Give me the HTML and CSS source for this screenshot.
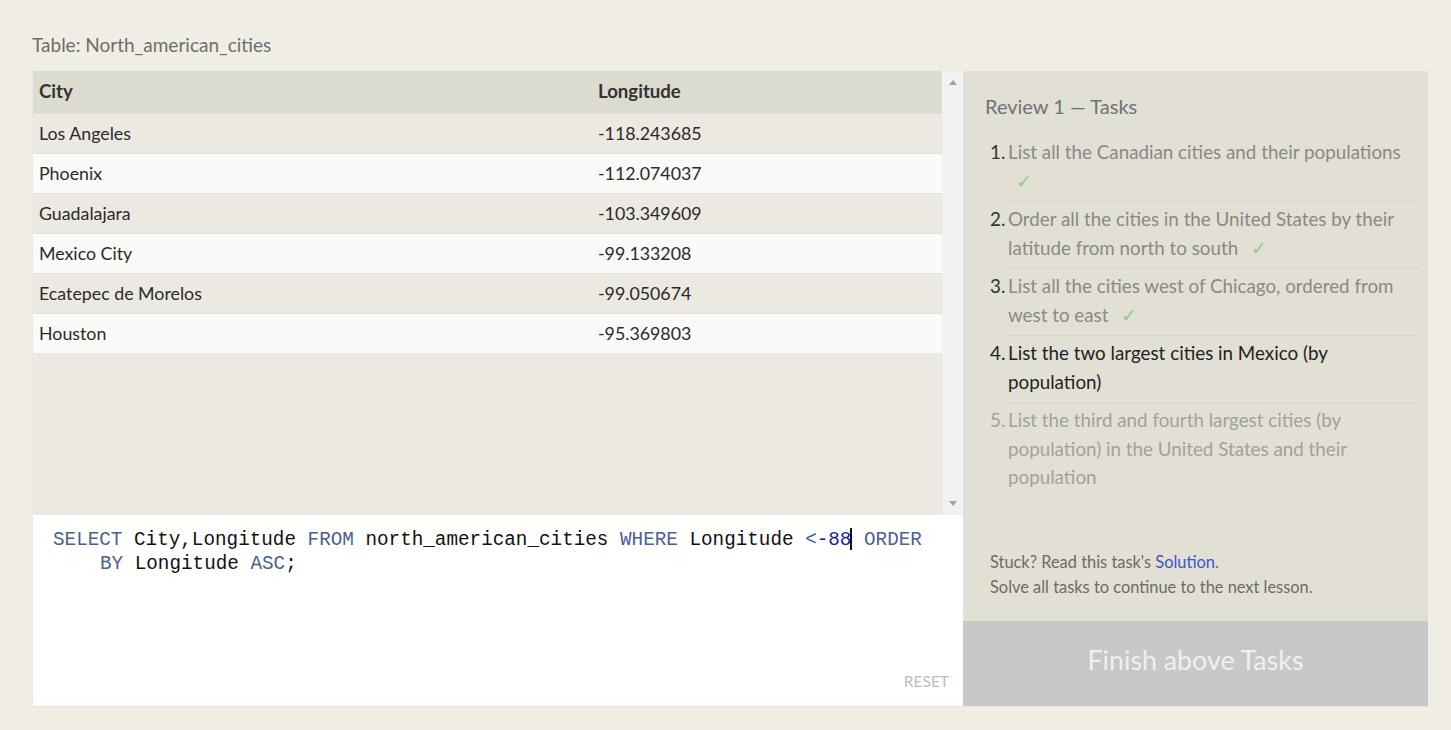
FILE: index.html
```html
<!DOCTYPE html>
<html>
<head>
<meta charset="utf-8">
<link rel="stylesheet" href="styles.css">
</head>
<body>
<div class="page">
  <div class="title">Table: North_american_cities</div>
  <div class="main">
    <div class="left">
      <div class="grid">
        <div class="table-wrap">
          <table class="data">
            <thead>
              <tr><th class="c1">City</th><th>Longitude</th></tr>
            </thead>
            <tbody>
              <tr><td>Los Angeles</td><td>-118.243685</td></tr>
              <tr><td>Phoenix</td><td>-112.074037</td></tr>
              <tr><td>Guadalajara</td><td>-103.349609</td></tr>
              <tr><td>Mexico City</td><td>-99.133208</td></tr>
              <tr><td>Ecatepec de Morelos</td><td>-99.050674</td></tr>
              <tr><td>Houston</td><td>-95.369803</td></tr>
            </tbody>
          </table>
        </div>
        <div class="scrollbar">
          <span class="arrow up"></span>
          <span class="arrow down"></span>
        </div>
      </div>
      <div class="editor">
        <div class="code"><span class="kw">SELECT</span> City,Longitude <span class="kw">FROM</span> north_american_cities <span class="kw">WHERE</span> Longitude <span class="kw">&lt;</span><span class="num">-88</span><span class="cursor"></span> <span class="kw">ORDER</span></div>
        <div class="code indent"><span class="kw">BY</span> Longitude <span class="kw">ASC</span>;</div>
        <div class="reset">RESET</div>
      </div>
    </div>
    <div class="right">
      <div class="tasks">
        <h2 class="heading">Review 1 — Tasks</h2>
        <ol class="task-list">
          <li class="done"><span class="n">1.</span><span class="t">List all the Canadian cities and their populations <span class="check">✓</span></span></li>
          <li class="done"><span class="n">2.</span><span class="t">Order all the cities in the United States by their latitude from north to south <span class="check">✓</span></span></li>
          <li class="done"><span class="n">3.</span><span class="t">List all the cities west of Chicago, ordered from west to east <span class="check">✓</span></span></li>
          <li class="current"><span class="n">4.</span><span class="t">List the two largest cities in Mexico (by population)</span></li>
          <li class="todo"><span class="n">5.</span><span class="t">List the third and fourth largest cities (by population) in the United States and their population</span></li>
        </ol>
        <div class="help">
          <p>Stuck? Read this task's <a class="link">Solution</a>.</p>
          <p>Solve all tasks to continue to the next lesson.</p>
        </div>
      </div>
      <div class="finish">Finish above Tasks</div>
    </div>
  </div>
</div>
</body>
</html>
```
FILE: styles.css
```css
html, body {
  margin: 0;
  padding: 0;
  background: #f0ede5;
}
.page {
  padding: 33px 23px 0 32px;
  font-family: "Lato", "Open Sans", sans-serif;
}
.title {
  font-size: 19px;
  line-height: 24px;
  color: #6e6e6e;
  height: 38px;
}
.main {
  display: flex;
  height: 635px;
  border-bottom: 1px solid #e6e3da;
}
.left {
  width: 931px;
  display: flex;
  flex-direction: column;
}
.grid {
  display: flex;
  height: 444px;
  background: #ebe9e1;
}
.table-wrap {
  flex: 1;
  padding-left: 1px;
}
.data {
  width: 100%;
  border-collapse: collapse;
  font-size: 17.8px;
  line-height: 22px;
  color: #2a2a2a;
}
.data th {
  text-align: left;
  font-weight: 700;
  font-size: 18.6px;
  background: #dcdbd0;
  height: 39px;
  padding: 0 6px 3px;
  color: #333;
}
.data th.c1 {
  width: 547px;
}
.data td {
  height: 37px;
  padding: 0 6px 2px;
  border-top: 1px solid #e3e1d9;
}
.data tbody tr:nth-child(odd) td {
  background: #ebe9e2;
}
.data tbody tr:nth-child(even) td {
  background: #fafaf9;
}
.scrollbar {
  width: 21px;
  background: #f1f1ef;
  display: flex;
  flex-direction: column;
  justify-content: space-between;
  align-items: center;
  padding: 9px 0 9px;
  box-sizing: border-box;
}
.arrow {
  width: 0;
  height: 0;
  border-left: 4px solid transparent;
  border-right: 4px solid transparent;
}
.arrow.up {
  border-bottom: 5px solid #a3a3a3;
}
.arrow.down {
  border-top: 5px solid #a3a3a3;
}
.editor {
  flex: 1;
  background: #ffffff;
  padding: 13px 20px 0 20px;
  position: relative;
  border-left: 1px solid #ebe9e1;
}
.code {
  font-family: "Liberation Mono", "DejaVu Sans Mono", monospace;
  font-size: 19.3px;
  line-height: 24px;
  color: #111;
  white-space: pre;
}
.code.indent {
  padding-left: 47px;
}
.kw {
  color: #4a5f93;
}
.num {
  color: #1b1bb0;
}
.cursor {
  display: inline-block;
  width: 0;
  height: 22px;
  border-left: 2px solid #111;
  vertical-align: -5px;
  margin-left: -1px;
}
.reset {
  position: absolute;
  right: 14px;
  bottom: 16px;
  font-size: 15.5px;
  color: #bdbdbd;
}
.right {
  width: 465px;
  display: flex;
  flex-direction: column;
  background: #e2dfd5;
}
.tasks {
  flex: 1;
  padding: 21px 10px 0 22px;
  display: flex;
  flex-direction: column;
}
.heading {
  margin: 0;
  font-weight: 400;
  font-size: 20px;
  line-height: 28px;
  color: #6c7479;
}
.task-list {
  list-style: none;
  margin: 18px 0 0;
  padding: 0;
}
.task-list li {
  display: flex;
  font-size: 18.8px;
  line-height: 28.5px;
  padding: 0;
}
.task-list li + li .t {
  border-top: 1px solid #d8d5cb;
}
.task-list .t {
  flex: 1;
  padding: 3px 4px 6px 0;
}
.task-list .n {
  width: 18px;
  padding: 4px 0 0 5px;
}
.task-list li:first-child .t,
.task-list li:first-child .n {
  padding-top: 0;
}
.done .n { color: #333; }
.done .t { color: #8b8985; }
.current .n, .current .t { color: #222; }
.todo .n, .todo .t { color: #a3a19c; }
.check {
  display: inline-block;
  line-height: 20px;
  color: #8fcb8f;
  margin-left: 8px;
}
.help {
  margin-top: auto;
  padding: 0 0 22px 5px;
  font-size: 16.4px;
  line-height: 25px;
  color: #6e6b66;
}
.help p {
  margin: 0;
}
.link {
  color: #3a58c4;
}
.finish {
  height: 85px;
  box-sizing: border-box;
  padding-bottom: 8px;
  background: #c8c8c8;
  color: #f0f0f0;
  font-size: 26.8px;
  display: flex;
  align-items: center;
  justify-content: center;
}
```
